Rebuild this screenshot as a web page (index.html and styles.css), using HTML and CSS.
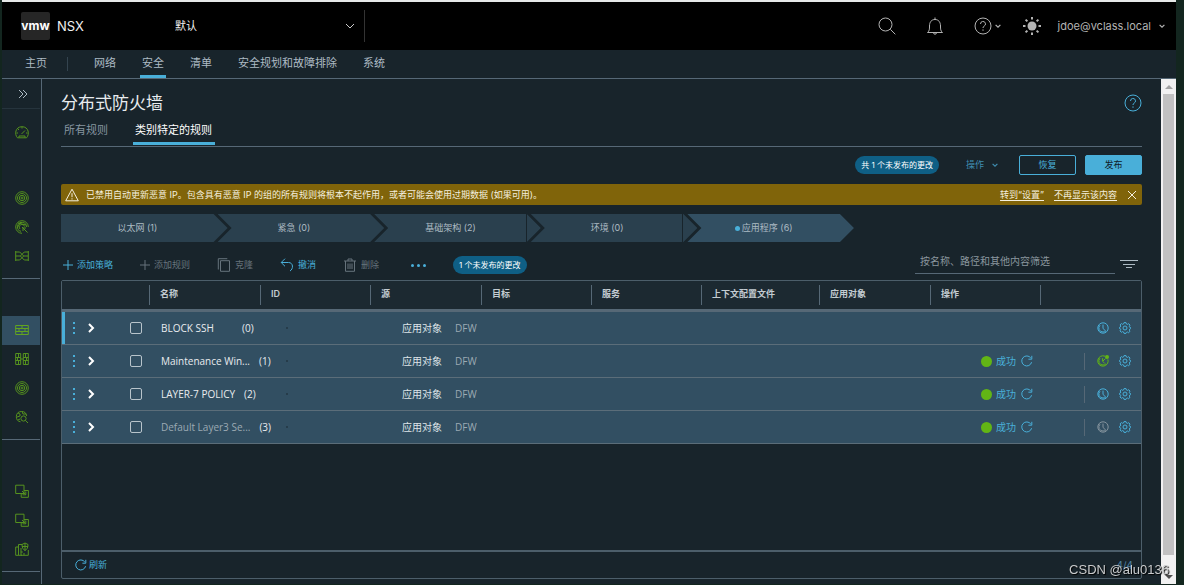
FILE: index.html
```html
<!DOCTYPE html>
<html lang="zh-CN">
<head>
<meta charset="utf-8">
<title>NSX - 分布式防火墙</title>
<link rel="stylesheet" href="styles.css">
</head>
<body>
<svg class="defs" aria-hidden="true">
  <symbol id="chev-down" viewBox="0 0 10 10"><path d="M1 3l4 4 4-4"/></symbol>
  <symbol id="chev-right" viewBox="0 0 10 10"><path d="M3 1l4 4-4 4"/></symbol>
  <symbol id="plus" viewBox="0 0 10 10"><path d="M5 0v10M0 5h10"/></symbol>
  <symbol id="help" viewBox="0 0 18 18"><circle cx="9" cy="9" r="8"/><path d="M6.5 7a2.5 2.5 0 1 1 3.6 2.2c-.8.4-1.1.9-1.1 1.8M9 12.4v1.4"/></symbol>
  <symbol id="refresh" viewBox="0 0 12 12"><path d="M10.6 7.2a5 5 0 1 1-.8-4.2M10.8.8v3.4H7.4"/></symbol>
  <symbol id="clock" viewBox="0 0 12 12"><circle cx="6" cy="6" r="5.2"/><path d="M3 3.2A4 4 0 0 0 6 10a4 4 0 0 0 3-1.2M6 2.6v3.6l2.2 2.6"/></symbol>
  <symbol id="clock-dot" viewBox="0 0 12 12"><path d="M8 1.2a5.2 5.2 0 1 0 2.9 3.2M3 3.2A4 4 0 0 0 6 10a4 4 0 0 0 3-1.2M5.6 3.2v3l2 2.2M6 6l2.4-2.4"/><circle class="solid" cx="10" cy="2" r="2"/></symbol>
  <symbol id="gear" viewBox="0 0 12 12"><circle cx="6" cy="6" r="2"/><path d="M5 .6h2l.4 1.4 1 .4 1.3-.7 1.3 1.4-.7 1.2.4 1 1 .3v1l-1 .5-.4 1 .7 1.2-1.4 1.4-1.2-.7-1 .4L7 11.400H5l-.4-1.400-1-.4-1.300.7L1 8.900l.7-1.200-.4-1L.4 6.400v-1l1-.4.4-1L1 2.900l1.400-1.300 1.200.7 1-.4z"/></symbol>
  <symbol id="target" viewBox="0 0 14 14"><circle cx="7" cy="7" r="6.300"/><circle cx="7" cy="7" r="4.500"/><circle cx="7" cy="7" r="2.700"/><circle cx="7" cy="7" r="1"/></symbol>
  <symbol id="dual-box" viewBox="0 0 14 14"><path d="M.7 1.200h8.300v8.300H.7zM9 6.500h4.400v6.800H6.200V9.500M7 7l3.500 3.500M10.800 7.500v3.300H7.500"/></symbol>
</svg>

<div class="app">
  <header class="topbar">
    <a class="brand" href="#"><span class="logo">vmw</span><span class="product">NSX</span></a>
    <label class="scope">
      <select aria-label="范围"><option>默认</option></select>
      <svg class="icon s10"><use href="#chev-down"/></svg>
    </label>
    <div class="tools">
      <button aria-label="搜索"><svg class="icon s18" viewBox="0 0 18 18"><circle cx="7.500" cy="7.500" r="6.500"/><path d="M12.300 12.300L17.300 17.300"/></svg></button>
      <button aria-label="通知"><svg class="icon s18" viewBox="0 0 18 18"><path d="M1.500 15.500c2-1.500 2-3.500 2-6.500C3.500 5 5.500 2.500 9 2.500S14.500 5 14.500 9c0 3 0 5 2 6.500zM9 .5v2M7.500 15.700a1.500 1.500 0 0 0 3 0"/></svg></button>
      <button class="help" aria-label="帮助"><svg class="icon s18"><use href="#help"/></svg><svg class="icon s6"><use href="#chev-down"/></svg></button>
      <button aria-label="主题"><svg class="icon s18" viewBox="0 0 18 18"><circle class="solid" cx="9" cy="9" r="4.500"/><path class="rays" d="M9 0v2.500M9 15.500v2.500M0 9h2.500M15.500 9h2.500M2.600 2.600l1.800 1.800M13.600 13.600l1.800 1.800M2.600 15.400l1.800-1.800M13.600 4.400l1.800-1.800"/></svg></button>
      <button class="user">jdoe@vclass.local<svg class="icon s6"><use href="#chev-down"/></svg></button>
    </div>
  </header>

  <nav class="mainnav">
    <a class="home" href="#">主页</a>
    <a href="#">网络</a>
    <a class="active" href="#">安全</a>
    <a href="#">清单</a>
    <a href="#">安全规划和故障排除</a>
    <a href="#">系统</a>
  </nav>

  <div class="body">
    <aside class="sidebar">
      <button class="expand" aria-label="展开"><svg class="icon s10" viewBox="0 0 10 10"><path d="M1 1l4 4-4 4M5 1l4 4-4 4"/></svg></button>
      <div class="group overview">
        <a href="#" aria-label="概览"><svg class="icon s14" viewBox="0 0 14 14"><path d="M2.500 12.800C-.8 9.500.2 1.700 7 1.700s7.800 7.800 4.500 11.100zM7 2v1.500M1.500 8H3M11 8h1.500M3 4l1 1M6.500 9L10 5.500M4 12.500v-1.500h6v1.500"/></svg></a>
      </div>
      <div class="group">
        <a href="#" aria-label="检测"><svg class="icon s14"><use href="#target"/></svg></a>
        <a href="#" aria-label="分析"><svg class="icon s14" viewBox="0 0 14 14"><path d="M7 13.300A6.300 6.300 0 1 1 13.300 7M6 11.300A4.500 4.500 0 1 1 11.500 7M5 9A2.700 2.700 0 1 1 9.600 6.500M7 7l5.500 5.500M8 11V8h3M3 3l8 2M2 8l4-6"/></svg></a>
        <a href="#" aria-label="连接"><svg class="icon s14" viewBox="0 0 14 14"><path d="M.7 2v10M13.300 2v10M.7 3h4l4 4h4.600M.7 11h4l4-4M13.300 3h-4l-4 4H.7M13.300 11h-4l-4-4"/></svg></a>
      </div>
      <div class="group">
        <a class="active" href="#" aria-label="分布式防火墙"><svg class="icon s14" viewBox="0 0 14 14"><path d="M.7 2.500h12.600v9H.7zM.7 5.500h12.600M.7 8.500h12.600M7 2.500v3M4 5.500v3M10 5.500v3M7 8.500v3"/></svg></a>
        <a href="#" aria-label="网关防火墙"><svg class="icon s14" viewBox="0 0 14 14"><path d="M.7 1.500h5v11h-5zM8.300 1.500h5v11h-5zM.7 5.500h5M.7 8.500h5M8.300 5.500h5M8.300 8.500h5M3.500 1.500v4M2.500 5.500v3M3.500 8.500v4M10.500 1.500v4M11.500 5.500v3M10.500 8.500v4M5.700 7h2.600"/></svg></a>
        <a href="#" aria-label="入侵检测"><svg class="icon s14"><use href="#target"/></svg></a>
        <a href="#" aria-label="恶意软件"><svg class="icon s14" viewBox="0 0 14 14"><path d="M5.500 11.800A5.200 5.200 0 1 1 11.700 6M3 3l2 1v2L2 7M7 1.500L8 4h3M3 10l2-1"/><circle cx="8.500" cy="8.500" r="2.600"/><path d="M10.400 10.400l2.600 2.600"/></svg></a>
      </div>
      <div class="group">
        <a href="#" aria-label="东西向"><svg class="icon s14"><use href="#dual-box"/></svg></a>
        <a href="#" aria-label="南北向"><svg class="icon s14"><use href="#dual-box"/></svg></a>
        <a href="#" aria-label="平台"><svg class="icon s14" viewBox="0 0 14 14"><path d="M7 13.300H.7V5h2.800v8M3.500 5V2.500H7M6 6v7.300h7.300V8M5.800 10h2M9 11v2"/><path d="M7 2.500l3-1.500 3 1.500c0 3-1 5-3 6-2-1-3-3-3-6zM10 1v7.500M7 4.500h6"/></svg></a>
      </div>
    </aside>

    <main class="content">
      <div class="heading">
        <h1>分布式防火墙</h1>
        <button class="link" aria-label="帮助"><svg class="icon s18"><use href="#help"/></svg></button>
      </div>
      <div class="tabs" role="tablist">
        <button role="tab">所有规则</button>
        <button role="tab" class="active" aria-selected="true">类别特定的规则</button>
      </div>
      <div class="actions">
        <span class="badge">共 1 个未发布的更改</span>
        <button class="menu">操作<svg class="icon s6"><use href="#chev-down"/></svg></button>
        <button class="btn">恢复</button>
        <button class="btn primary">发布</button>
      </div>
      <div class="alert" role="alert">
        <svg class="icon s14" viewBox="0 0 14 14"><path d="M7 1.200L13.300 12.800H.7zM7 5.200v4M7 10.300v1.200"/></svg>
        <p>已禁用自动更新恶意 IP。包含具有恶意 IP 的组的所有规则将根本不起作用，或者可能会使用过期数据 (如果可用)。</p>
        <a href="#">转到“设置”</a>
        <a href="#">不再显示该内容</a>
        <button aria-label="关闭"><svg class="icon s10" viewBox="0 0 10 10"><path d="M1 1l8 8M9 1L1 9"/></svg></button>
      </div>
      <div class="steps">
        <a href="#">以太网 (1)</a>
        <a href="#">紧急 (0)</a>
        <a class="split" href="#">基础架构 (2)</a>
        <a class="split" href="#">环境 (0)</a>
        <a class="active" href="#"><i></i>应用程序 (6)</a>
      </div>
      <div class="toolbar">
        <button class="link"><svg class="icon s10"><use href="#plus"/></svg>添加策略</button>
        <button disabled><svg class="icon s10"><use href="#plus"/></svg>添加规则</button>
        <button disabled><svg class="icon s14" viewBox="0 0 14 14"><path d="M3.500 2.700h9v10.600h-9zM1.300 11.500V.7h9"/></svg>克隆</button>
        <button class="link"><svg class="icon s14" viewBox="0 0 14 14"><path d="M5 .7L1.200 4.500 5 8.300M1.200 4.500h7.300c5 0 5 6.500 1.500 8.500"/></svg>撤消</button>
        <button disabled><svg class="icon s14" viewBox="0 0 14 14"><path d="M1 3h12M2.500 3v10.300h9V3M5 3V1h4v2M5 5.500v5.500M7 5.500v5.500M9 5.500v5.500"/></svg>删除</button>
        <button class="link more" aria-label="更多"><i></i><i></i><i></i></button>
        <span class="badge">1 个未发布的更改</span>
        <input class="filter" type="text" aria-label="筛选" placeholder="按名称、路径和其他内容筛选">
        <button class="filter-btn" aria-label="筛选选项"><svg class="icon s18" viewBox="0 0 18 18"><path d="M0 4.500h18M3 8.500h12M6 11.500h6"/></svg></button>
      </div>

      <section class="grid">
        <table>
          <colgroup><col class="c-ctl"><col class="c-main"><col class="c-std"><col class="c-main"><col class="c-std"><col class="c-std"><col class="c-wide"><col class="c-main"><col class="c-std"><col></colgroup>
          <thead>
            <tr><th></th><th><span>名称</span></th><th><span>ID</span></th><th><span>源</span></th><th><span>目标</span></th><th><span>服务</span></th><th><span>上下文配置文件</span></th><th><span>应用对象</span></th><th><span>操作</span></th><th><span></span></th></tr>
          </thead>
          <tbody>
            <tr class="current">
              <td><div class="ctl"><span class="grip"><i></i><i></i><i></i></span><button aria-label="展开"><svg class="icon s10"><use href="#chev-right"/></svg></button><input type="checkbox" aria-label="选择 BLOCK SSH"></div></td>
              <td colspan="2"><div class="name"><b>BLOCK SSH</b><span>(0)</span><i></i></div></td>
              <td colspan="5"><div class="applied"><span>应用对象</span><em>DFW</em></div></td>
              <td colspan="2"><div class="state"><button class="link" aria-label="计划"><svg class="icon s12"><use href="#clock"/></svg></button><button class="link" aria-label="设置"><svg class="icon s12"><use href="#gear"/></svg></button></div></td>
            </tr>
            <tr>
              <td><div class="ctl"><span class="grip"><i></i><i></i><i></i></span><button aria-label="展开"><svg class="icon s10"><use href="#chev-right"/></svg></button><input type="checkbox" aria-label="选择 Maintenance Win..."></div></td>
              <td colspan="2"><div class="name"><b>Maintenance Win...</b><span>(1)</span><i></i></div></td>
              <td colspan="5"><div class="applied"><span>应用对象</span><em>DFW</em></div></td>
              <td colspan="2"><div class="state"><a class="ok" href="#"><i></i>成功</a><button class="link reload" aria-label="刷新状态"><svg class="icon s12"><use href="#refresh"/></svg></button><button class="green" aria-label="计划"><svg class="icon s12"><use href="#clock-dot"/></svg></button><button class="link" aria-label="设置"><svg class="icon s12"><use href="#gear"/></svg></button></div></td>
            </tr>
            <tr>
              <td><div class="ctl"><span class="grip"><i></i><i></i><i></i></span><button aria-label="展开"><svg class="icon s10"><use href="#chev-right"/></svg></button><input type="checkbox" aria-label="选择 LAYER-7 POLICY"></div></td>
              <td colspan="2"><div class="name"><b>LAYER-7 POLICY</b><span>(2)</span><i></i></div></td>
              <td colspan="5"><div class="applied"><span>应用对象</span><em>DFW</em></div></td>
              <td colspan="2"><div class="state"><a class="ok" href="#"><i></i>成功</a><button class="link reload" aria-label="刷新状态"><svg class="icon s12"><use href="#refresh"/></svg></button><button class="link" aria-label="计划"><svg class="icon s12"><use href="#clock"/></svg></button><button class="link" aria-label="设置"><svg class="icon s12"><use href="#gear"/></svg></button></div></td>
            </tr>
            <tr class="default">
              <td><div class="ctl"><span class="grip"><i></i><i></i><i></i></span><button aria-label="展开"><svg class="icon s10"><use href="#chev-right"/></svg></button><input type="checkbox" aria-label="选择 Default Layer3 Se..."></div></td>
              <td colspan="2"><div class="name"><b>Default Layer3 Se...</b><span>(3)</span><i></i></div></td>
              <td colspan="5"><div class="applied"><span>应用对象</span><em>DFW</em></div></td>
              <td colspan="2"><div class="state"><a class="ok" href="#"><i></i>成功</a><button class="link reload" aria-label="刷新状态"><svg class="icon s12"><use href="#refresh"/></svg></button><button disabled aria-label="计划"><svg class="icon s12"><use href="#clock"/></svg></button><button class="link" aria-label="设置"><svg class="icon s12"><use href="#gear"/></svg></button></div></td>
            </tr>
          </tbody>
        </table>
        <footer>
          <button class="link"><svg class="icon s12"><use href="#refresh"/></svg>刷新</button>
          <span class="count">4/4</span>
        </footer>
      </section>
    </main>

    <div class="scrollbar" aria-hidden="true"><i class="up"></i><span class="thumb"></span><i class="down"></i></div>
  </div>
</div>
<div class="watermark">CSDN @alu0136</div>
</body>
</html>
```

FILE: styles.css
```css
* { box-sizing: border-box; }

body {
  margin: 0;
  min-height: 100vh;
  padding: 0 8px 1px 2px;
  display: flex;
  background: #13261f;
  color: #adbbc4;
  font: 9px/16px Inter, "Noto Sans CJK SC", sans-serif;
}

a { color: inherit; text-decoration: none; }
h1, p { margin: 0; font-weight: 400; }

button, input, select { font: inherit; color: inherit; }

button {
  display: inline-flex;
  align-items: center;
  padding: 0;
  border: 0;
  background: none;
  cursor: pointer;
}

button:disabled { color: #66737c; }
.link { color: #49afd9; }
.green { color: #62b515; }

.defs { position: absolute; width: 0; height: 0; }

.icon {
  flex: none;
  fill: none;
  stroke: currentColor;
  stroke-width: 1;
}

.solid { fill: currentColor; stroke: none; }
.s6 { width: 6px; height: 6px; stroke-width: 2; }
.s10 { width: 10px; height: 10px; }
.s12 { width: 12px; height: 12px; }
.s14 { width: 14px; height: 14px; }
.s18 { width: 18px; height: 18px; }

.app {
  flex: 1;
  min-width: 0;
  display: flex;
  flex-direction: column;
  border-top: 2px solid #e6e8e8;
  background: #18242b;
}

/* Top bar */
.topbar {
  display: flex;
  align-items: center;
  height: 48px;
  padding: 0 11px 0 19px;
  background: #000;
}

.brand { display: flex; align-items: center; gap: 7px; width: 152px; }

.logo {
  width: 29px;
  height: 28px;
  border-radius: 2px;
  background: #262626;
  color: #fff;
  font: 700 12px/27px Inter, sans-serif;
  text-align: center;
}

.product { color: #f2f2f2; font-size: 13px; }

.scope {
  position: relative;
  width: 192px;
  height: 32px;
  border-right: 1px solid #333;
}

.scope select {
  width: 100%;
  height: 32px;
  padding: 0 0 0 2px;
  border: 0;
  appearance: none;
  background: #000;
  color: #f2f2f2;
  font-size: 11px;
}

.scope .icon {
  position: absolute;
  top: 11px;
  right: 9px;
  pointer-events: none;
  color: #ccc;
}

.tools {
  flex: 1;
  display: flex;
  align-items: center;
  justify-content: flex-end;
  gap: 30px;
  color: #b3b3b3;
}

.tools .help { gap: 3px; margin-right: -8px; }
.tools .user { gap: 8px; margin-left: -13px; font-size: 11px; }
.rays { stroke-width: 2; }

/* Main navigation */
.mainnav {
  display: flex;
  gap: 22px;
  height: 29px;
  padding-left: 21px;
  border-bottom: 1px solid #566876;
  font-size: 11px;
  line-height: 26px;
}

.mainnav a { padding: 0 2px; border-bottom: 3px solid transparent; height: 28px; }
.mainnav a.active { border-color: #49afd9; }

.mainnav .home::after {
  content: "";
  display: inline-block;
  height: 14px;
  margin: 0 0 0 20px;
  border-right: 1px solid #34444f;
  vertical-align: middle;
}

.body { flex: 1; display: flex; }

/* Sidebar */
.sidebar {
  width: 40px;
  padding-right: 1px;
  border-right: 1px solid #566876;
  color: #55921f;
}

.expand {
  width: 100%;
  height: 30px;
  padding-left: 3px;
  justify-content: center;
  border-bottom: 1px solid #26343d;
  color: #adbbc4;
}

.group { padding: 37px 0 7px; border-bottom: 1px solid #566876; }
.group.overview { padding: 9px 0 0; border: 0; }

.group a {
  display: flex;
  align-items: center;
  justify-content: center;
  height: 29px;
  padding: 0 0 2px 1px;
}

.group a.active { background: #324f62; color: #62a420; }

/* Content */
.content {
  flex: 1;
  min-width: 0;
  display: flex;
  flex-direction: column;
  padding: 9px 19px 5px;
}

.heading {
  display: flex;
  align-items: center;
  justify-content: space-between;
  height: 30px;
}

h1 { color: #e9ecef; font-size: 17px; line-height: 28px; }

.tabs {
  display: flex;
  gap: 22px;
  height: 29px;
  padding-left: 1px;
  border-bottom: 1px solid #566876;
}

.tabs button {
  height: 27px;
  padding: 0 3px 0 2px;
  border-bottom: 3px solid transparent;
  color: #8796a0;
  font-size: 11px;
}

.tabs .active { border-color: #49afd9; color: #fff; }

.actions {
  display: flex;
  align-items: center;
  justify-content: flex-end;
  height: 37px;
  padding-bottom: 1px;
}

.badge {
  padding: 0 6px;
  border-radius: 9px;
  background: #0f5f85;
  color: #fff;
  font-size: 8px;
  line-height: 18px;
}

.menu { gap: 8px; margin: 0 21px 0 27px; color: #3f8db0; }

.btn {
  justify-content: center;
  width: 57px;
  height: 20px;
  border: 1px solid #49afd9;
  border-radius: 2px;
  color: #49afd9;
}

.primary { margin-left: 9px; background: #49afd9; color: #102028; }

.alert {
  display: flex;
  align-items: center;
  min-height: 21px;
  padding: 0 5px 0 4px;
  border-radius: 2px;
  background: #80640a;
  color: #f4efdf;
}

.alert p { flex: 1; margin-left: 7px; line-height: 14px; }
.alert a { margin-right: 10px; text-decoration: underline; text-underline-offset: 2px; }

.steps { display: flex; width: 793px; max-width: 100%; margin-top: 9px; }

.steps a {
  flex: 1;
  display: flex;
  align-items: center;
  justify-content: center;
  height: 28px;
  padding-right: 14px;
  background: #2a404e;
  clip-path: polygon(0 0, calc(100% - 14px) 0, 100% 50%, calc(100% - 14px) 100%, 0 100%, 14px 50%);
}

.steps a:first-child { clip-path: polygon(0 0, calc(100% - 14px) 0, 100% 50%, calc(100% - 14px) 100%, 0 100%); }
.steps a + a { margin-left: -10px; }
.steps .split { background: linear-gradient(#18242b, #18242b) right 14px top / 1px 100% no-repeat #2a404e; }
.steps .active { background: #324f62; }
.steps i { width: 5px; height: 5px; margin-right: 2px; border-radius: 50%; background: #49afd9; }

.toolbar {
  display: flex;
  align-items: center;
  gap: 27px;
  height: 38px;
  padding: 8px 4px 0 2px;
}

.toolbar button { gap: 4px; }
.toolbar .more { gap: 3px; margin-left: 5px; }
.more i { width: 3px; height: 3px; border-radius: 50%; background: currentColor; }

.filter {
  align-self: flex-start;
  width: 200px;
  height: 24px;
  margin-left: auto;
  padding: 0 5px 2px;
  border: 0;
  border-bottom: 1px solid #566876;
  background: none;
  outline: 0;
  font-size: 10px;
}

.filter::placeholder { color: #8a969e; }
.toolbar .filter-btn { margin-left: -22px; }

/* Rules grid */
.grid {
  flex: 1;
  display: flex;
  flex-direction: column;
  border: 1px solid #4c5e6a;
  border-radius: 2px;
}

table { width: 100%; table-layout: fixed; border-spacing: 0; }
.c-ctl { width: 87px; }
.c-main { width: 111px; }
.c-std { width: 110px; }
.c-wide { width: 118px; }

th, td { padding: 0; text-align: left; }

th {
  height: 31px;
  background: #1c2931;
  border-bottom: 3px solid #566876;
  color: #c3ccd2;
  font-weight: 600;
}

th span {
  display: block;
  height: 20px;
  padding-left: 10px;
  border-left: 1px solid #566876;
  line-height: 18px;
}

td {
  height: 33px;
  border-bottom: 1px solid #5b6d79;
  background: #324f62;
  font-family: "Open Sans", "Noto Sans CJK SC", sans-serif;
  font-size: 10px;
}

td > div { display: flex; align-items: center; }

.ctl { height: 32px; padding-left: 11px; }
.current .ctl { padding-left: 8px; border-left: 3px solid #49afd9; }
.grip { display: grid; gap: 3px; margin-right: 11px; }
.grip i { width: 2px; height: 2px; background: #49afd9; }
.ctl .icon { stroke-width: 2; color: #fff; }

.ctl input {
  appearance: none;
  width: 12px;
  height: 12px;
  margin: 0 0 0 34px;
  border: 1px solid #b8c4cb;
  border-radius: 2px;
}

.name { gap: 9px; padding: 0 82px 0 12px; color: #e9ecef; }
.name b { min-width: 72px; font-weight: 400; white-space: nowrap; }
.name i { width: 2px; height: 2px; margin-left: auto; background: #263c4a; }
.default b { color: #9caab3; }

.applied { gap: 13px; padding-left: 32px; color: #dfe5e9; }
.applied em { color: #9caab3; font-style: normal; }

.state { justify-content: flex-end; gap: 10px; padding-right: 10px; }
.state button:disabled { color: #84939d; }

.ok {
  display: flex;
  align-items: center;
  gap: 4px;
  color: #49afd9;
}

.ok i { width: 11px; height: 11px; border-radius: 50%; background: #62b515; }
.state .reload { margin: 0 2px 0 -5px; }

.reload::after {
  content: "";
  height: 17px;
  margin-left: 51px;
  border-right: 1px solid #566876;
}

footer {
  display: flex;
  align-items: center;
  justify-content: space-between;
  height: 28px;
  margin-top: auto;
  padding: 0 8px 0 13px;
  border-top: 2px solid #4c5e6a;
}

footer .link { gap: 2px; }
.count { color: #4d7fa0; font-size: 10px; }

/* Scroll bar */
.scrollbar {
  display: flex;
  flex-direction: column;
  align-items: center;
  width: 15px;
  padding: 6px 0 5px;
  background: #f1f1f1;
}

.scrollbar i { border: 4px solid transparent; }
.scrollbar .up { border-top: 0; border-bottom-color: #a3a3a3; }
.scrollbar .down { border-bottom: 0; border-top-color: #505050; }
.thumb { flex: 1; width: 11px; margin: 5px 0 20px; background: #c1c1c1; }

.watermark {
  position: fixed;
  right: 15px;
  bottom: 7px;
  color: #c9cbcc;
  font: 13px/16px "Liberation Sans", Arial, sans-serif;
  text-shadow: 1px 1px 1px #000;
}
```
